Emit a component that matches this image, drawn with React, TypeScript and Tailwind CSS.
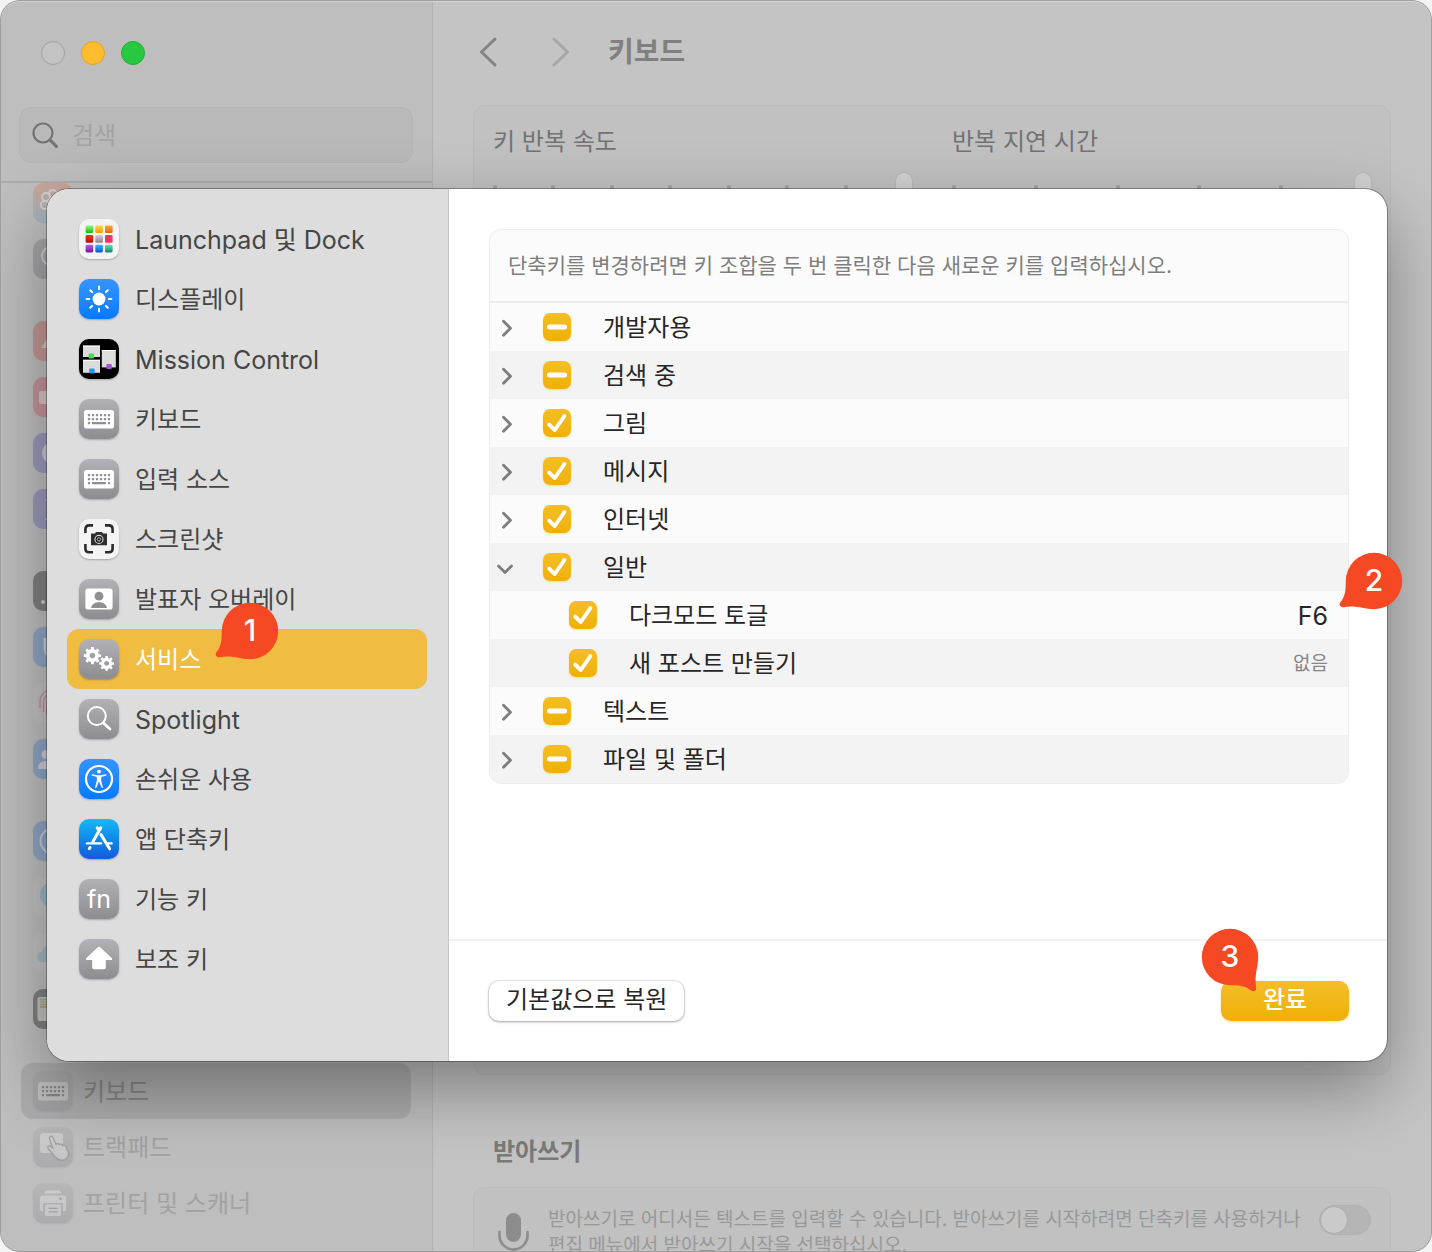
import React, { useEffect, useRef, useState } from "react";

type IconProps = { children?: React.ReactNode };

function Glyph({ children }: IconProps) {
  return (
    <svg viewBox="0 0 40 40" className="block size-10" aria-hidden="true">
      {children}
    </svg>
  );
}

/* ---------- glyphs shared by both sidebars ---------- */

function KeyboardGlyph({ keys }: { keys: string }) {
  const cols = [10, 14, 18, 22, 26, 30];
  return (
    <Glyph>
      <rect x="5" y="11" width="30" height="18.5" rx="2.6" fill="white" />
      {[16.2, 20.2].map((y) =>
        cols.map((x) => <rect key={`${x}-${y}`} x={x - 1.1} y={y - 1.1} width="2.2" height="2.2" rx="0.4" fill={keys} />),
      )}
      <rect x="8.9" y="23" width="2.2" height="2.2" rx="0.4" fill={keys} />
      <rect x="13" y="23" width="14" height="2.2" rx="0.4" fill={keys} />
      <rect x="28.9" y="23" width="2.2" height="2.2" rx="0.4" fill={keys} />
    </Glyph>
  );
}

function LaunchpadGlyph() {
  const tiles = [
    ["#8dfb6f", "#17b51c"], ["#ffdc3c", "#f09a08"], ["#ffa62e", "#de6a10"],
    ["#f5321e", "#b80c0c"], ["#c9d2d6", "#7f898c"], ["#f23a50", "#ff2e62"],
    ["#b65be6", "#6d1b9e"], ["#20c3f7", "#1250d8"], ["#5fe0b8", "#12866a"],
  ];
  return (
    <Glyph>
      {tiles.map(([a, b], i) => (
        <g key={i}>
          <linearGradient id={`lp${i}`} x1="0" y1="0" x2="0" y2="1">
            <stop offset="0" stopColor={a} />
            <stop offset="1" stopColor={b} />
          </linearGradient>
          <rect x={6.6 + (i % 3) * 9.7} y={6.4 + Math.floor(i / 3) * 9.7} width="7.6" height="7.6" rx="1.3" fill={`url(#lp${i})`} />
        </g>
      ))}
    </Glyph>
  );
}

function SunGlyph() {
  return (
    <Glyph>
      <circle cx="20" cy="20" r="6.4" fill="white" />
      <g stroke="white" strokeWidth="2" strokeLinecap="round">
        {[0, 45, 90, 135, 180, 225, 270, 315].map((a) => (
          <line key={a} x1="20" y1="10.2" x2="20" y2="7.6" transform={`rotate(${a} 20 20)`} />
        ))}
      </g>
    </Glyph>
  );
}

function MissionGlyph() {
  return (
    <Glyph>
      <g fill="#dcdcdc">
        <rect x="4" y="6.6" width="17" height="11.4" />
        <rect x="4" y="20.8" width="17" height="13" />
        <rect x="22.8" y="11" width="14" height="17.4" />
      </g>
      <g fill="#ffffff">
        <rect x="4" y="6.6" width="17" height="1" />
        <rect x="4" y="20.8" width="17" height="1" />
        <rect x="22.8" y="11" width="14" height="1" />
      </g>
      <rect x="9.6" y="14.6" width="5.4" height="5" rx="1" fill="#46dd45" />
      <rect x="27.4" y="25" width="5.4" height="5" rx="1" fill="#a552dc" />
      <rect x="10.2" y="29.6" width="5.4" height="5" rx="1" fill="#1e9bf5" />
    </Glyph>
  );
}

function ScreenshotGlyph() {
  return (
    <Glyph>
      <g fill="none" stroke="#2c2c2c" strokeWidth="2.6">
        <path d="M6.4 14V10.2Q6.4 6.4 10.2 6.4H14" />
        <path d="M26 6.4h3.8q3.8 0 3.8 3.8V14" />
        <path d="M33.6 25v4.4q0 3.8-3.8 3.8H26" />
        <path d="M14 33.2h-3.8q-3.8 0-3.8-3.8V25" />
      </g>
      <path d="M12 14.6h4l1-1.6h6l1 1.6h4v11.6H12z" fill="#2f2f2f" />
      <circle cx="20" cy="20.4" r="4" fill="#1a1a1a" stroke="#d8d8d8" strokeWidth="1.1" />
      <circle cx="20" cy="20.4" r="1.7" fill="none" stroke="#d0d0d0" strokeWidth="0.9" />
    </Glyph>
  );
}

function PresenterGlyph() {
  return (
    <Glyph>
      <rect x="6.4" y="9.6" width="27.2" height="21" rx="2.6" fill="white" />
      <circle cx="20" cy="17.2" r="4.4" fill="#8e8e93" />
      <path d="M12 29c.8-4 4-5.800 8-5.800s7.200 1.800 8 5.800z" fill="#8e8e93" />
    </Glyph>
  );
}

function Gear({ x, y, scale }: { x: number; y: number; scale: number }) {
  return (
    <g transform={`translate(${x} ${y}) scale(${scale})`} stroke="white" fill="none">
      <circle r="4.8" strokeWidth="3.800" />
      <g strokeWidth="3">
        {[0, 45, 90, 135, 180, 225, 270, 315].map((a) => (
          <line key={a} x1="0" y1="-5.800" x2="0" y2="-8.8" transform={`rotate(${a})`} />
        ))}
      </g>
    </g>
  );
}

function GearsGlyph() {
  return (
    <Glyph>
      <Gear x={13.4} y={16.6} scale={0.98} />
      <Gear x={27.6} y={24.4} scale={0.84} />
    </Glyph>
  );
}

function SpotlightGlyph() {
  return (
    <Glyph>
      <circle cx="17.8" cy="17" r="9" fill="none" stroke="white" strokeWidth="2" />
      <path d="M24.4 24 31 30" stroke="white" strokeWidth="2.8" strokeLinecap="round" />
    </Glyph>
  );
}

function AccessibilityGlyph() {
  return (
    <Glyph>
      <circle cx="20" cy="20" r="13" fill="none" stroke="white" strokeWidth="2.2" />
      <circle cx="20" cy="12.6" r="1.900" fill="white" />
      <path
        d="M13 15.2 18.400 16.200Q20 16.500 21.600 16.200L27 15.200Q27.900 15.900 27.200 16.600L22.200 17.900V22L24 28.400Q23.300 29.300 22.500 28.600L20.300 22.900H19.700L17.500 28.600Q16.700 29.300 16 28.400L17.800 22V17.900L12.800 16.600Q12.100 15.900 13 15.200Z"
        fill="white"
      />
    </Glyph>
  );
}

function AppStoreGlyph() {
  return (
    <Glyph>
      <g stroke="white" strokeWidth="3" strokeLinecap="round" fill="none">
        <path d="M21.800 8.800 14 22.600" />
        <path d="M18.200 8.800 19.800 11.600" />
        <path d="M22 15.600 30.600 29.800" />
        <path d="M11 28.600 10.300 29.600" />
      </g>
      <g stroke="white" strokeWidth="2.400" strokeLinecap="round">
        <path d="M8 24.400H22" />
        <path d="M29 24.400H32.600" />
      </g>
    </Glyph>
  );
}

function ShiftGlyph() {
  return (
    <Glyph>
      <path
        d="M18.800 8.300q1.200-1.100 2.400 0l11.400 10.600q1.400 2-.8 2.200h-5v7.400q0 1.800-1.800 1.800h-10q-1.800 0-1.800-1.800v-7.400h-5q-2.200-.2-.8-2.200z"
        fill="white"
      />
    </Glyph>
  );
}

/* ---------- background window ---------- */

const faded: { bg: string; glyph?: React.ReactNode }[][] = [
  [
    {
      bg: "bg-linear-to-b from-[#d09a84] to-[#95b2c8]",
      glyph: (
        <Glyph>
          <g fill="none" stroke="#dedad8" strokeWidth="1.8">
            <circle cx="13" cy="14" r="4" />
            <circle cx="20" cy="11" r="4" />
            <circle cx="27" cy="14" r="4" />
            <circle cx="12" cy="22" r="4" />
          </g>
        </Glyph>
      ),
    },
    {
      bg: "bg-[#99999b]",
      glyph: (
        <Glyph>
          <circle cx="18" cy="17" r="9" fill="none" stroke="#d0d0d0" strokeWidth="2" />
        </Glyph>
      ),
    },
  ],
  [
    { bg: "bg-[#c98784]", glyph: <Glyph><path d="M8 27 14 18 20 8 26 18 32 27z" fill="#dccaca" /></Glyph> },
    { bg: "bg-[#ca828e]", glyph: <Glyph><path d="M6 16q0-2 2-2h5l8-6v25l-8-6H8q-2 0-2-2z" fill="#dccacd" /></Glyph> },
    { bg: "bg-[#8b8abb]", glyph: <Glyph><circle cx="20" cy="20" r="11" fill="#cccbda" /></Glyph> },
    {
      bg: "bg-[#8b8abb]",
      glyph: (
        <Glyph>
          <path d="M12 10h16L20 20zM12 31h16L20 20z" fill="#cccbda" />
        </Glyph>
      ),
    },
  ],
  [
    { bg: "bg-[#666666]", glyph: <Glyph><circle cx="10" cy="31" r="2" fill="#d8d8d8" /></Glyph> },
    { bg: "bg-[#7c9cc9]", glyph: <Glyph><path d="M12 11v10q0 8 8 8" stroke="#ccd4e0" strokeWidth="3" fill="none" /></Glyph> },
    {
      bg: "bg-[#c4c4c4]",
      glyph: (
        <Glyph>
          <g fill="none" stroke="#c9808d" strokeWidth="1.6">
            <path d="M7 25V19A13 13 0 0 1 33 19V25" />
            <path d="M10.500 29V19.500A9.500 9.500 0 0 1 29.500 19.500" />
            <path d="M14 32V20A6 6 0 0 1 26 20" />
          </g>
        </Glyph>
      ),
    },
    {
      bg: "bg-[#7c9cc9]",
      glyph: (
        <Glyph>
          <circle cx="13" cy="15.500" r="4.500" fill="#d1d7e0" />
          <path d="M5 30q0-8 8-8t8 8z" fill="#d1d7e0" />
        </Glyph>
      ),
    },
  ],
  [
    { bg: "bg-[#7c9cc9]", glyph: <Glyph><circle cx="20" cy="20" r="12.500" fill="none" stroke="#ccd4e0" strokeWidth="2" /></Glyph> },
    { bg: "bg-[#c4c4c4]", glyph: <Glyph><circle cx="20" cy="18" r="13" fill="#8eb2c9" /><path d="M12 26h12v8z" fill="#9f82c0" /></Glyph> },
    { bg: "bg-[#c4c4c4]", glyph: <Glyph><path d="M9 29a5 5 0 0 1 0-10 8 8 0 0 1 14-4v14z" fill="#94b6c4" /></Glyph> },
    {
      bg: "bg-[#666666]",
      glyph: (
        <Glyph>
          <rect x="4.500" y="8" width="31" height="24" rx="2" fill="#c4c3bf" />
          <path d="M7 10.500h26" stroke="#7fa5bd" strokeWidth="2" />
          <path d="M7 13h26" stroke="#c4aa72" strokeWidth="2" />
          <path d="M7 15.500h26" stroke="#84b57a" strokeWidth="2" />
          <path d="M7 18h26" stroke="#cb8579" strokeWidth="2" />
        </Glyph>
      ),
    },
  ],
];

function TrackpadGlyph() {
  return (
    <Glyph>
      <rect x="7" y="6" width="23" height="20" rx="2.6" fill="white" />
      <path
        d="M16.400 11.400c-.6-2.200 2.600-3.200 3.600-1l3 7c1.200-1.400 3-1 3.400.2 1.200-1 2.800-.4 3.200.8 1.400-.8 2.800 0 3.200 1.200l2.400 5.400c1.400 3.400-.8 7-4.400 7.800-3.600.8-6.400-.2-8.600-2.800l-7-8.400c-1.400-1.800.8-3.400 2.400-2.400l2 1.600z"
        fill="white"
        stroke="#77777a"
        strokeWidth="1.300"
      />
    </Glyph>
  );
}

function PrinterGlyph() {
  return (
    <Glyph>
      <path d="M11.500 10.500q.5-3 3-3h11q2.500 0 3 3z" fill="white" />
      <path d="M10 12.500h20q3 0 3 3V26q0 2.500-3 2.500V20H10v8.500q-3 0-3-2.500V15.500q0-3 3-3z" fill="white" />
      <circle cx="27.600" cy="15.800" r="1.300" fill="#77777a" />
      <rect x="12" y="21.500" width="16" height="11.500" rx="1.600" fill="white" />
      <path d="M15.500 25.300h9M15.500 28.800h9" stroke="#77777a" strokeWidth="1.300" />
    </Glyph>
  );
}

const bottomItems = [
  { label: "키보드", glyph: <KeyboardGlyph keys="#444444" />, active: true },
  { label: "트랙패드", glyph: <TrackpadGlyph />, active: false },
  { label: "프린터 및 스캐너", glyph: <PrinterGlyph />, active: false },
];

function BackSidebar() {
  return (
    <aside className="flex w-[433px] shrink-0 flex-col overflow-hidden border-r border-[#b3b3b3] bg-[#bebebe]">
      <div className="flex h-[183px] shrink-0 flex-col border-b-2 border-[#adadad]">
        <div className="flex gap-4 pt-[41px] pl-[41px]">
          <button aria-label="닫기" className="size-6 rounded-full border border-[#a2a2a2] bg-[#c3c3c3]" />
          <button aria-label="최소화" className="size-6 rounded-full border border-[#e5a125] bg-[#febc2e]" />
          <button aria-label="확대" className="size-6 rounded-full border border-[#1fb033] bg-[#28c840]" />
        </div>
        <label className="mx-[19px] mt-[42px] flex h-14 items-center gap-3.5 rounded-xl border border-[#b4b4b4] bg-[#b9b9b9] pl-3">
          <svg viewBox="0 0 26 26" className="size-[26px] shrink-0" aria-hidden="true">
            <circle cx="11" cy="11" r="9.500" fill="none" stroke="#737373" strokeWidth="2.200" />
            <path d="M18 18 24.400 24.400" stroke="#737373" strokeWidth="3" strokeLinecap="round" />
          </svg>
          <input
            type="text"
            aria-label="검색"
            placeholder="검색"
            className="min-w-0 flex-1 bg-transparent pt-0.5 text-2xl outline-none placeholder:text-[#a3a3a3]"
          />
        </label>
      </div>
      <div className="min-h-0 flex-1 overflow-hidden">
        <nav className="-mt-2 flex flex-col gap-[26px] px-[21px]">
          {faded.map((group, i) => (
            <ul key={i}>
              {group.map((it, j) => (
                <li key={j} className="flex h-14 items-center pl-3">
                  <span className={`size-10 overflow-hidden rounded-[10px] opacity-70 ${it.bg}`}>{it.glyph}</span>
                </li>
              ))}
            </ul>
          ))}
          <ul>
            {bottomItems.map((it) => (
              <li key={it.label}>
                <a
                  href="#"
                  className={
                    it.active
                      ? "flex h-14 items-center gap-[10px] rounded-xl bg-black/9 pl-3 text-2xl text-[#858585]"
                      : "flex h-14 items-center gap-[10px] pl-3 text-2xl text-[#a2a2a2]"
                  }
                >
                  <span className="size-10 rounded-[10px] bg-linear-to-b from-[#8e8e93]/15 to-[#8e8e93]/40 shadow-sm shadow-black/5">
                    <span className="block opacity-30">{it.glyph}</span>
                  </span>
                  <span className="pt-0.5">{it.label}</span>
                </a>
              </li>
            ))}
          </ul>
        </nav>
      </div>
    </aside>
  );
}

function Slider({ label, ticks }: { label: string; ticks: number }) {
  return (
    <label className="flex min-w-0 flex-1 flex-col">
      <span className="h-8 text-2xl leading-8 text-[#737373]">{label}</span>
      <span className="relative mt-[15px] block h-10">
        <span className="absolute inset-x-0 top-3 flex justify-between pr-1.5">
          {Array.from({ length: ticks }, (_, i) => (
            <i key={i} className={i === ticks - 1 ? "size-1" : "h-2 w-1 rounded-full bg-[#a3a3a3]"} />
          ))}
        </span>
        <input
          type="range"
          min={0}
          max={10}
          defaultValue={10}
          className="relative block h-10 w-full appearance-none bg-transparent [&::-webkit-slider-thumb]:h-10 [&::-webkit-slider-thumb]:w-4 [&::-webkit-slider-thumb]:appearance-none [&::-webkit-slider-thumb]:rounded-full [&::-webkit-slider-thumb]:bg-[#d0d0d0] [&::-webkit-slider-thumb]:shadow-[0_0_2px_rgba(0,0,0,0.15)]"
        />
      </span>
    </label>
  );
}

function BackMain() {
  return (
    <main className="flex min-w-0 flex-1 flex-col overflow-hidden bg-[#c4c4c4] pr-[41px] pl-10">
      <header className="flex h-[105px] shrink-0 items-center pb-0.5 pl-1.5">
        <button aria-label="뒤로" className="text-[#848484]">
          <svg viewBox="0 0 18 30" className="h-[30px] w-[18px]" fill="none" stroke="currentColor" strokeWidth="3" strokeLinecap="round" strokeLinejoin="round">
            <path d="M16 2 2.500 15 16 28" />
          </svg>
        </button>
        <button aria-label="앞으로" className="ml-[55px] text-[#a6a6a6]">
          <svg viewBox="0 0 18 30" className="h-[30px] w-[18px]" fill="none" stroke="currentColor" strokeWidth="3" strokeLinecap="round" strokeLinejoin="round">
            <path d="M2 2 15.500 15 2 28" />
          </svg>
        </button>
        <h1 className="ml-[38px] text-[28px] leading-9 font-bold text-[#808080]">키보드</h1>
      </header>
      <section className="flex h-[970px] shrink-0 gap-10 rounded-xl border border-[#bbbbbb] bg-[#c1c1c1] px-[19px] pt-5">
        <Slider label="키 반복 속도" ticks={8} />
        <Slider label="반복 지연 시간" ticks={6} />
      </section>
      <h2 className="mt-[59px] mb-[17px] h-9 shrink-0 pl-5 text-2xl leading-9 font-bold text-[#7a7a7a]">받아쓰기</h2>
      <section className="flex shrink-0 items-start rounded-xl border border-[#bbbbbb] bg-[#c1c1c1] px-[19px] pt-4 pb-8">
        <svg viewBox="0 0 40 50" className="mt-2 h-[50px] w-10 shrink-0" aria-hidden="true">
          <rect x="13" y="1" width="15" height="29" rx="7.500" fill="#8c8c8c" />
          <path d="M6.500 20v3.500a14 14 0 0 0 28 0V20M20.500 38v6" fill="none" stroke="#8c8c8c" strokeWidth="2.600" strokeLinecap="round" />
        </svg>
        <p className="mt-[3px] ml-[15px] min-w-0 flex-1 text-[19px] leading-[26px] text-[#989898]">
          받아쓰기로 어디서든 텍스트를 입력할 수 있습니다. 받아쓰기를 시작하려면 단축키를 사용하거나 편집 메뉴에서 받아쓰기 시작을 선택하십시오.
        </p>
        <label className="mt-px ml-3 flex h-[30px] w-[52px] shrink-0 items-center rounded-full border border-[#b0b0b0] bg-[#b5b5b5]">
          <input type="checkbox" role="switch" aria-label="받아쓰기" className="size-7 appearance-none rounded-full border border-[#adadad] bg-[#cacaca] checked:ml-auto" />
        </label>
      </section>
    </main>
  );
}

/* ---------- dialog ---------- */

function Pin({ n, down = false, className }: { n: number; down?: boolean; className: string }) {
  return (
    <span className={`pointer-events-none absolute z-20 size-14 ${className}`}>
      <svg viewBox="-28 -28 56 56" className="absolute inset-0 size-14 overflow-visible" aria-hidden="true">
        <path
          transform={down ? "rotate(-90)" : undefined}
          d="M-28.200 0A28.200 28.200 0 1 1 0 28.200C-11 28.200-17 24-31 26.200C-34 26.500-35.500 23-33.200 20.800C-28.500 15-28.200 8-28.200 0Z"
          fill="#f54823"
        />
      </svg>
      <span className="absolute inset-0 flex items-center justify-center pb-0.5 text-[30px] leading-none font-medium text-white">{n}</span>
    </span>
  );
}

const gray = "bg-linear-to-b from-[#b1b1b6] to-[#8c8c91]";
const blue = "bg-linear-to-b from-[#3595ff] to-[#007aff]";
const pale = "bg-[#f4f4f4]";

const categories: { label: string; bg: string; glyph: React.ReactNode; latin?: boolean }[] = [
  { label: "Launchpad 및 Dock", bg: pale, glyph: <LaunchpadGlyph />, latin: true },
  { label: "디스플레이", bg: blue, glyph: <SunGlyph /> },
  { label: "Mission Control", bg: "bg-black", glyph: <MissionGlyph />, latin: true },
  { label: "키보드", bg: gray, glyph: <KeyboardGlyph keys="#8e8e93" /> },
  { label: "입력 소스", bg: gray, glyph: <KeyboardGlyph keys="#8e8e93" /> },
  { label: "스크린샷", bg: pale, glyph: <ScreenshotGlyph /> },
  { label: "발표자 오버레이", bg: gray, glyph: <PresenterGlyph /> },
  { label: "서비스", bg: gray, glyph: <GearsGlyph /> },
  { label: "Spotlight", bg: gray, glyph: <SpotlightGlyph />, latin: true },
  { label: "손쉬운 사용", bg: blue, glyph: <AccessibilityGlyph /> },
  { label: "앱 단축키", bg: "bg-linear-to-b from-[#1cb8f5] to-[#1858dc]", glyph: <AppStoreGlyph /> },
  {
    label: "기능 키",
    bg: gray,
    glyph: <span className="flex size-10 items-center justify-center text-[25px] leading-none text-white">fn</span>,
  },
  { label: "보조 키", bg: gray, glyph: <ShiftGlyph /> },
];

function Check({ label, mixed }: { label: string; mixed: boolean }) {
  const ref = useRef<HTMLInputElement>(null);
  useEffect(() => {
    if (ref.current) ref.current.indeterminate = mixed;
  }, [mixed]);
  return (
    <span className="grid size-7 shrink-0">
      <input
        ref={ref}
        type="checkbox"
        id={label}
        defaultChecked={!mixed}
        className="col-start-1 row-start-1 size-7 appearance-none rounded-[7px] bg-linear-to-b from-[#f5be25] to-[#efb000] shadow-[0_1px_2px_rgba(239,176,0,0.35)]"
      />
      <svg viewBox="0 0 28 28" className="pointer-events-none col-start-1 row-start-1 size-7" fill="none" stroke="white" strokeLinecap="round" strokeLinejoin="round" aria-hidden="true">
        {mixed ? <path d="M6.500 13.900H21.500" strokeWidth="5" /> : <path d="M6.200 15.600 11.800 21 21.400 7" strokeWidth="3.900" />}
      </svg>
    </span>
  );
}

type Row = { label: string; mixed?: boolean; open?: boolean; child?: boolean; shortcut?: string; pin?: boolean };

const rows: Row[] = [
  { label: "개발자용", mixed: true },
  { label: "검색 중", mixed: true },
  { label: "그림" },
  { label: "메시지" },
  { label: "인터넷" },
  { label: "일반", open: true },
  { label: "다크모드 토글", child: true, shortcut: "F6", pin: true },
  { label: "새 포스트 만들기", child: true, shortcut: "없음" },
  { label: "텍스트", mixed: true },
  { label: "파일 및 폴더", mixed: true },
];

function ShortcutTable() {
  return (
    <div className="rounded-xl border border-[#ececec] bg-[#fbfbfb]">
      <p className="flex h-[73px] items-center border-b-2 border-[#ededed] px-[18px] text-[21px] text-[#7e7e7e]">
        단축키를 변경하려면 키 조합을 두 번 클릭한 다음 새로운 키를 입력하십시오.
      </p>
      <table className="w-full border-collapse">
        <tbody>
          {rows.map((r) => (
            <tr key={r.label} className="group">
              <td className="h-12 p-0 group-even:bg-[#f3f3f3] group-last:rounded-bl-[11px]">
                <div className={r.child ? "flex items-center pl-[79px]" : "flex items-center pl-1"}>
                  {!r.child && (
                    <button aria-label={r.open ? "접기" : "펼치기"} className="mr-[25px] size-6 shrink-0 text-[#7d7d7d]">
                      <svg viewBox="0 0 24 24" className="block size-6" fill="none" stroke="currentColor" strokeWidth="2.800" strokeLinecap="round" strokeLinejoin="round">
                        {r.open ? <path d="M4.500 11 11 17.500 17.500 11" /> : <path d="M9.500 6.200 16.500 13.200 9.500 20.200" />}
                      </svg>
                    </button>
                  )}
                  <Check label={r.label} mixed={!!r.mixed} />
                  <label htmlFor={r.label} className="pt-0.5 pl-8 text-2xl text-[#262626]">
                    {r.label}
                  </label>
                </div>
              </td>
              <td className="relative h-12 p-0 pt-0.5 pr-5 text-right group-even:bg-[#f3f3f3] group-last:rounded-br-[11px]">
                {r.shortcut && (
                  <span className={r.pin ? "text-[25px] leading-8 text-[#262626]" : "text-[19px] leading-8 text-[#858585]"}>{r.shortcut}</span>
                )}
                {r.pin && <Pin n={2} className="-top-[38px] -right-[54px]" />}
              </td>
            </tr>
          ))}
        </tbody>
      </table>
    </div>
  );
}

function ShortcutDialog() {
  const [selected, setSelected] = useState("서비스");
  return (
    <div
      role="dialog"
      aria-label="키보드 단축키"
      className="absolute top-[189px] right-[45px] left-[47px] flex min-h-[872px] rounded-[22px] bg-white shadow-[0_0_0_1px_rgba(0,0,0,0.3),0_28px_70px_rgba(0,0,0,0.36)]"
    >
      <nav className="w-[402px] shrink-0 rounded-l-[22px] border-r border-[#c8c8c8] bg-[#dddddd] py-5 pr-[21px] pl-5">
        <ul>
          {categories.map((c) => (
            <li key={c.label} className="relative">
              <button
                onClick={() => setSelected(c.label)}
                className={
                  selected === c.label
                    ? "flex h-[60px] w-full items-center gap-4 rounded-xl bg-[#f0bc42] pl-3 text-left text-white"
                    : "flex h-[60px] w-full items-center gap-4 rounded-xl pl-3 text-left text-[#454545]"
                }
              >
                <span className={`size-10 shrink-0 overflow-hidden rounded-[10px] shadow-[0_1px_2px_rgba(0,0,0,0.25)] ${c.bg}`}>{c.glyph}</span>
                <span className={c.latin ? "pt-0.5 text-[25px] leading-8" : "pt-0.5 text-2xl"}>{c.label}</span>
              </button>
              {c.label === "서비스" && <Pin n={1} className="-top-[26px] left-[155px]" />}
            </li>
          ))}
        </ul>
      </nav>
      <div className="flex min-w-0 flex-1 flex-col">
        <div className="flex-1 pt-10 pr-[38px] pb-10 pl-10">
          <ShortcutTable />
        </div>
        <footer className="flex h-[122px] items-center justify-between border-t-2 border-[#f2f2f2] pr-[38px] pl-10">
          <button className="flex h-10 items-center rounded-[10px] bg-white px-[17px] pb-0.5 text-2xl text-[#262626] shadow-[0_0_0_1px_rgba(0,0,0,0.08),0_1px_3px_rgba(0,0,0,0.3)]">
            기본값으로 복원
          </button>
          <div className="relative">
            <button className="flex h-10 w-32 items-center justify-center rounded-[10px] bg-linear-to-b from-[#f4be26] to-[#efb000] pb-0.5 text-2xl font-medium text-white shadow-[0_1px_3px_rgba(239,176,0,0.4)]">
              완료
            </button>
            <Pin n={3} down className="-top-[52px] -left-[19px]" />
          </div>
        </footer>
      </div>
    </div>
  );
}

export default function App() {
  return (
    <div className="h-screen bg-[#f4f4f4] font-['Inter','Noto_Sans_CJK_KR',sans-serif]">
      <div className="relative flex h-full overflow-hidden rounded-[20px]">
        <BackSidebar />
        <BackMain />
        <ShortcutDialog />
        <div className="pointer-events-none absolute inset-0 rounded-[20px] border border-[#9f9f9f] shadow-[inset_0_1px_0_rgba(255,255,255,0.3)]" />
      </div>
    </div>
  );
}
